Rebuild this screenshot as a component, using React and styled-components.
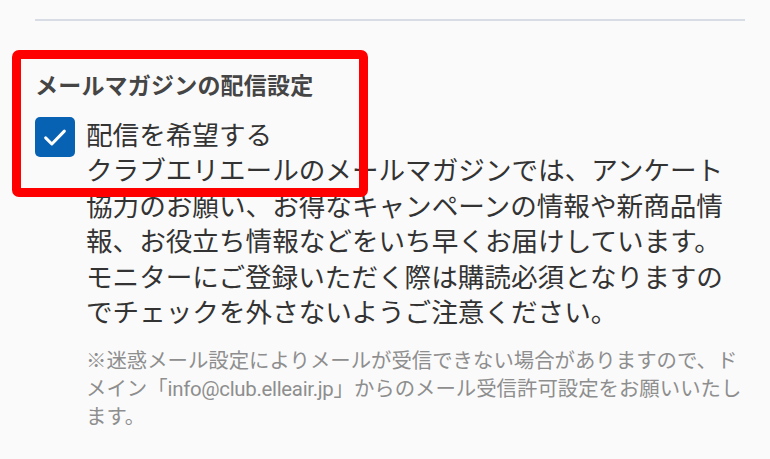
import React from "react";
import styled, { createGlobalStyle } from "styled-components";

const GlobalStyle = createGlobalStyle`
  html, body {
    margin: 0;
    padding: 0;
    background: #fafafa;
  }
  body {
    font-family: Roboto, "Noto Sans CJK JP", sans-serif;
    color: #333;
  }
`;

const Page = styled.div`
  position: relative;
  width: 770px;
  height: 459px;
  overflow: hidden;
  padding: 19px 25px 0 35px;
  box-sizing: border-box;
`;

const Divider = styled.hr`
  margin: 0;
  border: none;
  height: 2px;
  background: #d8dde5;
`;

const Section = styled.section`
  padding-top: 50px;
`;

const Title = styled.h3`
  margin: 0;
  font-size: 23px;
  line-height: 32px;
  font-weight: 700;
  color: #454545;
  letter-spacing: 0.2px;
`;

const OptionRow = styled.label`
  display: flex;
  align-items: flex-start;
  gap: 11px;
  margin-top: 14px;
`;

const CheckBox = styled.span`
  flex: none;
  width: 40px;
  height: 40px;
  border-radius: 5px;
  background: #0862b3;
  display: flex;
  align-items: center;
  justify-content: center;
`;

const OptionText = styled.div`
  margin-top: 1px;
  font-size: 26.6px;
  line-height: 35.4px;
  color: #333;
`;

const Note = styled.p`
  margin: 17px -6px 0 51px;
  font-size: 20.4px;
  line-height: 28px;
  color: #8e8e8e;
`;

const Mail = styled.span`
  letter-spacing: -0.3px;
`;

const Highlight = styled.div`
  position: absolute;
  left: 12px;
  top: 50px;
  width: 356px;
  height: 147px;
  box-sizing: border-box;
  border: 9px solid #ff0000;
  border-radius: 7px;
  pointer-events: none;
`;

const App = () => {
  return (
    <>
      <GlobalStyle />
      <Page>
        <Divider />
        <Section>
          <Title>メールマガジンの配信設定</Title>
          <OptionRow>
            <CheckBox>
              <svg width="28" height="28" viewBox="0 0 24 24" fill="none">
                <path
                  d="M4 12.8l5.3 5.2L20 7"
                  stroke="#fff"
                  strokeWidth="2.6"
                  strokeLinecap="round"
                  strokeLinejoin="round"
                />
              </svg>
            </CheckBox>
            <OptionText>
              配信を希望する
              <br />
              クラブエリエールのメールマガジンでは、アンケート協力のお願い、お得なキャンペーンの情報や新商品情報、お役立ち情報などをいち早くお届けしています。モニターにご登録いただく際は購読必須となりますのでチェックを外さないようご注意ください。
            </OptionText>
          </OptionRow>
          <Note>
            ※迷惑メール設定によりメールが受信できない場合がありますので、ドメイン「<Mail>info@club.elleair.jp</Mail>」からのメール受信許可設定をお願いいたします。
          </Note>
        </Section>
        <Highlight />
      </Page>
    </>
  );
};

export default App;
